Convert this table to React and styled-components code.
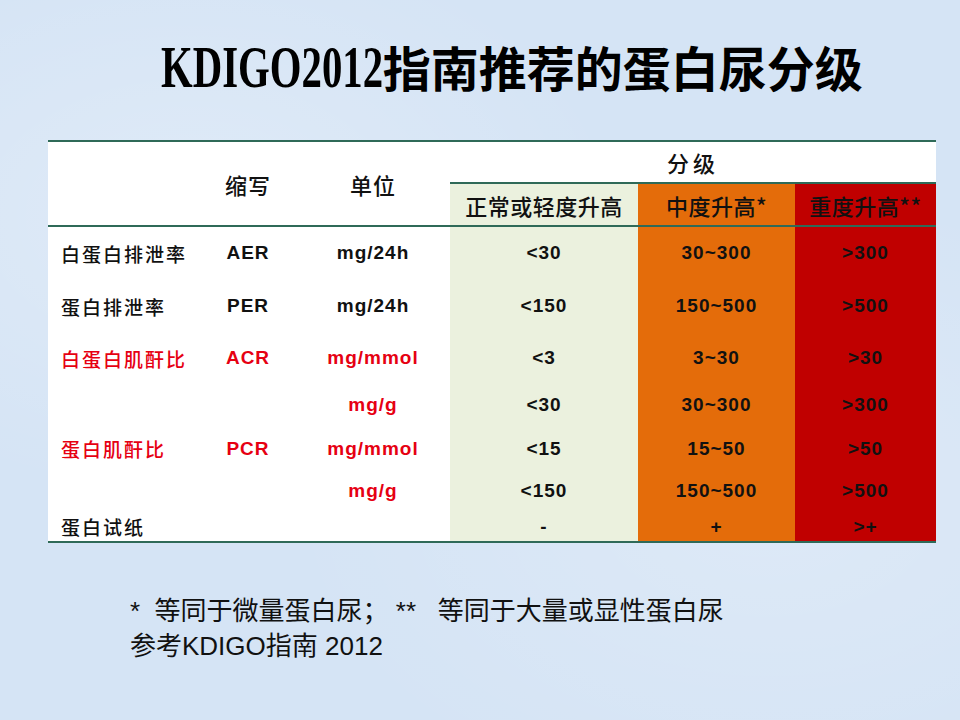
import React from "react";
import styled, { createGlobalStyle } from "styled-components";

const GlobalStyle = createGlobalStyle`
  html, body { margin: 0; padding: 0; }
  body {
    background: #d5e4f5;
    font-family: "Liberation Sans", "Noto Sans CJK SC", sans-serif;
  }
`;

const Slide = styled.div`
  width: 960px;
  height: 720px;
  display: flex;
  flex-direction: column;
  background-color: #d5e4f5;
  background-image:
    radial-gradient(ellipse at 20% 30%, rgba(255,255,255,0.25), transparent 40%),
    radial-gradient(ellipse at 80% 70%, rgba(255,255,255,0.2), transparent 45%);
  overflow: hidden;
`;

const Title = styled.h1`
  margin: 36px 0 0 0;
  height: 60px;
  line-height: 60px;
  padding-left: 64px;
  text-align: center;
  font-family: "Noto Sans CJK SC", sans-serif;
  font-size: 48px;
  font-weight: 700;
  color: #000;
  white-space: nowrap;
`;

const TitleLatin = styled.span`
  display: inline-block;
  font-family: "Liberation Serif", serif;
  font-size: 60px;
  font-weight: 700;
  line-height: 60px;
  transform: scaleX(0.68);
  transform-origin: left center;
  margin-right: -105px;
`;

const Table = styled.table`
  margin: 44px 0 0 48px;
  width: 888px;
  table-layout: fixed;
  border-collapse: collapse;
  background: #fff;
  border-top: 2px solid #2f6a58;
  border-bottom: 2px solid #2f6a58;
`;

const Head = styled.thead`
  border-bottom: 2px solid #2f6a58;
`;

const HeadRow = styled.tr`
  height: ${(p) => p.$h}px;
`;

const HeadCell = styled.th`
  padding: 0;
  font-family: "Noto Sans CJK SC", sans-serif;
  font-size: 22px;
  font-weight: 500;
  letter-spacing: ${(p) => p.$spacing ?? 1}px;
  color: #111;
  text-align: center;
  vertical-align: middle;
  white-space: nowrap;
`;

const GradeHead = styled(HeadCell)`
  background: ${(p) => p.$bg};
  border-top: 2px solid #2f6a58;
`;

const Row = styled.tr`
  height: ${(p) => p.$h}px;
`;

const LabelCell = styled.td`
  padding: 0 0 0 13px;
  font-family: "Noto Sans CJK SC", sans-serif;
  font-size: 19px;
  font-weight: 500;
  letter-spacing: 2px;
  color: ${(p) => (p.$red ? "#e60012" : "#111")};
  text-align: left;
  vertical-align: middle;
  white-space: nowrap;
`;

const TextCell = styled.td`
  padding: 0;
  font-family: "Liberation Sans", sans-serif;
  font-size: 19px;
  font-weight: 700;
  letter-spacing: 1px;
  color: ${(p) => (p.$red ? "#e60012" : "#111")};
  text-align: center;
  vertical-align: middle;
  white-space: nowrap;
`;

const GradeCell = styled(TextCell)`
  background: ${(p) => p.$bg};
  color: #111;
`;

const Notes = styled.div`
  margin: 51px 0 0 130px;
  font-family: "Liberation Sans", "Noto Sans CJK SC", sans-serif;
  font-size: 26px;
  line-height: 35px;
  color: #111;
  white-space: pre;
`;

const GRADES = [
  { name: "正常或轻度升高", bg: "#ebf1de" },
  { name: "中度升高*", bg: "#e46c0a" },
  { name: "重度升高**", bg: "#c00000" },
];

const COLS = [152, 96, 154, 188, 157, 141];

const ROWS = [
  { label: "白蛋白排泄率", abbr: "AER", unit: "mg/24h", vals: ["<30", "30~300", ">300"], h: 53 },
  { label: "蛋白排泄率", abbr: "PER", unit: "mg/24h", vals: ["<150", "150~500", ">500"], h: 54 },
  { label: "白蛋白肌酐比", abbr: "ACR", unit: "mg/mmol", vals: ["<3", "3~30", ">30"], red: true, h: 50 },
  { label: "", abbr: "", unit: "mg/g", vals: ["<30", "30~300", ">300"], red: true, h: 44 },
  { label: "蛋白肌酐比", abbr: "PCR", unit: "mg/mmol", vals: ["<15", "15~50", ">50"], red: true, h: 43 },
  { label: "", abbr: "", unit: "mg/g", vals: ["<150", "150~500", ">500"], red: true, h: 42 },
  { label: "蛋白试纸", abbr: "", unit: "", vals: ["-", "+", ">+"], h: 30 },
];

export default function App() {
  return (
    <>
      <GlobalStyle />
      <Slide>
        <Title>
          <TitleLatin>KDIGO2012</TitleLatin>指南推荐的蛋白尿分级
        </Title>
        <Table>
          <colgroup>
            {COLS.map((w, i) => (
              <col key={i} style={{ width: w }} />
            ))}
          </colgroup>
          <Head>
            <HeadRow $h={42}>
              <HeadCell rowSpan={2} />
              <HeadCell rowSpan={2}>缩写</HeadCell>
              <HeadCell rowSpan={2}>单位</HeadCell>
              <HeadCell colSpan={3} $spacing={4}>分级</HeadCell>
            </HeadRow>
            <HeadRow $h={43}>
              {GRADES.map((g) => (
                <GradeHead key={g.name} $bg={g.bg} $spacing={0.5}>
                  {g.name}
                </GradeHead>
              ))}
            </HeadRow>
          </Head>
          <tbody>
            {ROWS.map((r, i) => (
              <Row key={i} $h={r.h}>
                <LabelCell $red={r.red}>{r.label}</LabelCell>
                <TextCell $red={r.red}>{r.abbr}</TextCell>
                <TextCell $red={r.red}>{r.unit}</TextCell>
                {r.vals.map((v, j) => (
                  <GradeCell key={j} $bg={GRADES[j].bg}>
                    {v}
                  </GradeCell>
                ))}
              </Row>
            ))}
          </tbody>
        </Table>
        <Notes>
          {"*  等同于微量蛋白尿； **   等同于大量或显性蛋白尿\n参考KDIGO指南 2012"}
        </Notes>
      </Slide>
    </>
  );
}
